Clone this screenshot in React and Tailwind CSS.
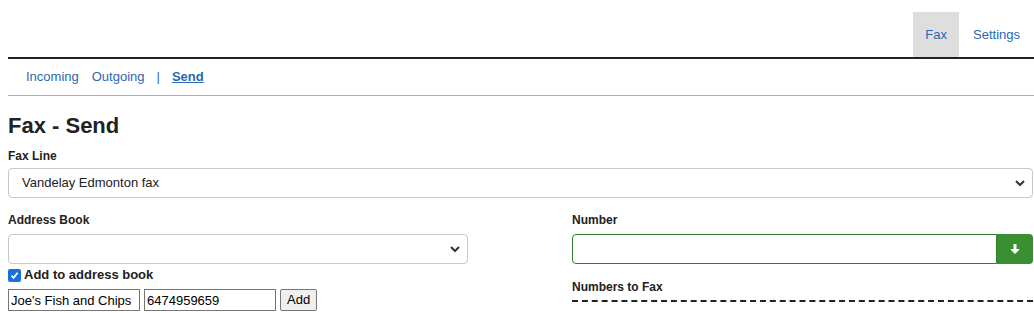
import React from 'react';

const font = { fontFamily: '"Liberation Sans", Arial, sans-serif' };

const Chevron = () => (
  <svg width="10" height="7" viewBox="0 0 10 7" className="absolute right-[7px] top-1/2 -translate-y-1/2">
    <path d="M1 1.5 L5 5.5 L9 1.5" fill="none" stroke="#333" strokeWidth="2" />
  </svg>
);

const Select = ({ value, className = '' }) => (
  <div className={`relative h-[30px] border border-[#c8c8c8] rounded-[4px] bg-white flex items-center px-[13px] text-[13px] text-[#222] ${className}`}>
    {value}
    <Chevron />
  </div>
);

export default function App() {
  return (
    <div className="bg-white w-[1034px] h-[313px] overflow-hidden pl-2 text-[#222]" style={font}>
      {/* top tabs */}
      <div className="flex justify-end pt-3 border-b-2 border-[#222]">
        <a className="h-[45px] px-[12px] flex items-center bg-[#dedede] text-[13px] text-[#2a68b1]">Fax</a>
        <a className="h-[45px] pl-[14px] pr-[14px] flex items-center text-[13px] text-[#2a68b1]">Settings</a>
      </div>

      {/* sub nav */}
      <div className="h-[37px] flex items-center pl-[18px] text-[13px] border-b border-[#b0b0b0]">
        <a className="text-[#2a68b1]">Incoming</a>
        <a className="text-[#2a68b1] ml-[13px]">Outgoing</a>
        <span className="ml-[12px] text-[#2a68b1]">|</span>
        <a className="ml-[12px] font-bold underline text-[#2a68b1]">Send</a>
      </div>

      <h1 className="text-[22px] font-bold leading-none mt-[19px]">Fax - Send</h1>

      <div className="text-[12px] font-bold mt-[12px] leading-[14px]">Fax Line</div>
      <Select value="Vandelay Edmonton fax" className="mt-[5px] w-[1025px]" />

      <div className="flex gap-[104px] mt-[15px]">
        <div className="w-[460px]">
          <div className="text-[12px] font-bold leading-[14px]">Address Book</div>
          <Select value="" className="mt-[7px]" />
          <label className="flex items-center mt-[3px] h-[16px] text-[13px] font-bold">
            <span className="w-[13px] h-[13px] rounded-[2px] bg-[#1a6fe0] flex items-center justify-center mr-[3px]">
              <svg width="9" height="9" viewBox="0 0 9 9">
                <path d="M1.5 4.6 L3.6 6.8 L7.6 1.8" fill="none" stroke="white" strokeWidth="1.8" />
              </svg>
            </span>
            Add to address book
          </label>
          <div className="flex items-center gap-[4px] mt-[6px]">
            <input readOnly value="Joe's Fish and Chips" className="w-[132px] h-[22px] border border-[#767676] px-[2px] text-[13px] text-black outline-none" style={font} />
            <input readOnly value="6474959659" className="w-[132px] h-[22px] border border-[#767676] px-[2px] text-[13px] text-black outline-none" style={font} />
            <button className="h-[22px] px-[6px] border border-[#767676] rounded-[2px] bg-[#efefef] text-[13px] text-black" style={font}>Add</button>
          </div>
        </div>

        <div className="w-[461px]">
          <div className="text-[12px] font-bold leading-[14px]">Number</div>
          <div className="flex mt-[7px] h-[30px]">
            <div className="flex-1 border border-[#2f7d2a] rounded-l-[4px] bg-white" />
            <div className="w-[36px] bg-[#3a8f33] rounded-r-[4px] flex items-center justify-center">
              <svg width="10" height="12" viewBox="0 0 10 12">
                <path d="M5 1 V9" stroke="white" strokeWidth="3" />
                <path d="M1 6.5 L5 10.5 L9 6.5 Z" fill="white" stroke="white" strokeWidth="1" strokeLinejoin="round" />
              </svg>
            </div>
          </div>
          <div className="text-[12px] font-bold leading-[14px] mt-[16px] pb-[6px] border-b-2 border-dashed border-[#222]">Numbers to Fax</div>
        </div>
      </div>
    </div>
  );
}
